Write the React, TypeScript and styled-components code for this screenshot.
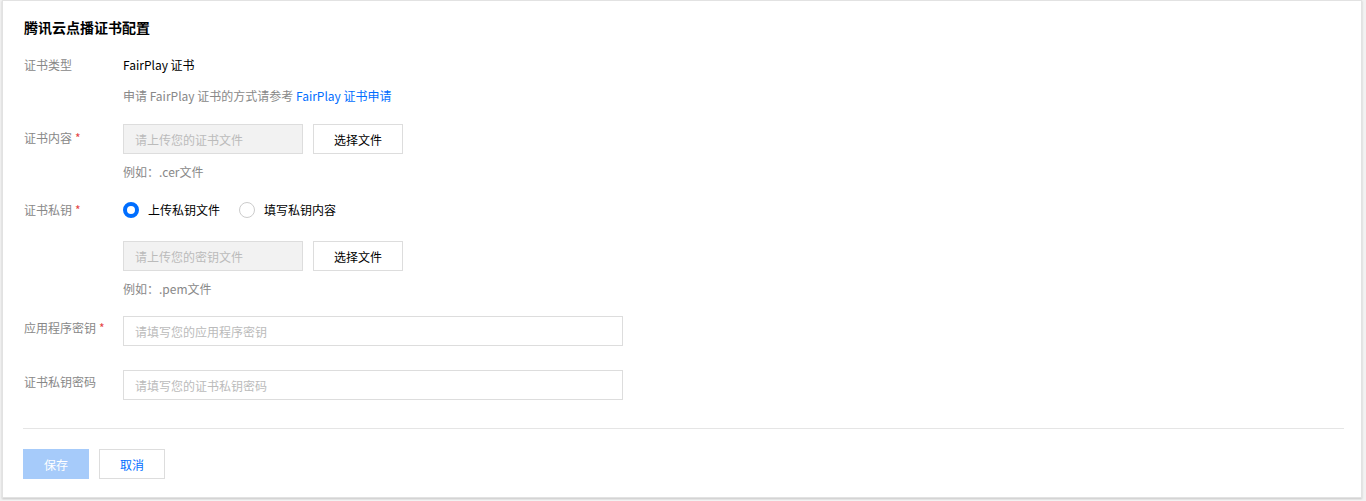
import React from "react";
import styled, { createGlobalStyle } from "styled-components";

const GlobalStyle = createGlobalStyle`
  html, body { margin: 0; padding: 0; }
  body {
    background: #f2f2f2;
    font-family: "Noto Sans CJK SC", "Noto Sans", sans-serif;
    font-size: 12px;
    color: #000;
  }
  * { box-sizing: border-box; }
`;

const Page = styled.div`
  padding: 0 4px 2px 2px;
`;

const Card = styled.div`
  background: #fff;
  border: 1px solid #e2e2e2;
  box-shadow: 0 1px 2px rgba(0, 0, 0, 0.18);
  padding: 16px 17px 18px 21px;
  height: 498px;
`;

const Title = styled.h2`
  margin: 0;
  font-size: 14px;
  line-height: 20px;
  font-weight: 700;
  color: #000;
`;

const Form = styled.div`
  display: flex;
  flex-direction: column;
`;

const Item = styled.div<{ $mt: number }>`
  display: grid;
  grid-template-columns: 99px 1fr;
  margin-top: ${(p) => p.$mt}px;
`;

const Label = styled.div<{ $pt: number }>`
  color: #888;
  line-height: 18px;
  padding-top: ${(p) => p.$pt}px;
  white-space: nowrap;
`;

const Star = styled.span`
  color: #e54545;
  margin-left: 3px;
`;

const Control = styled.div`
  display: flex;
  flex-direction: column;
`;

const Text = styled.div`
  line-height: 18px;
  color: #000;
`;

const Help = styled.div<{ $mt: number }>`
  line-height: 18px;
  color: #888;
  margin-top: ${(p) => p.$mt}px;
`;

const Link = styled.a`
  color: #006eff;
  text-decoration: none;
`;

const Line = styled.div<{ $mt?: number }>`
  display: flex;
  align-items: center;
  gap: 10px;
  margin-top: ${(p) => p.$mt ?? 0}px;
`;

const Input = styled.input<{ $w: number }>`
  width: ${(p) => p.$w}px;
  height: 30px;
  border: 1px solid #ddd;
  background: ${(p) => (p.disabled ? "#f2f2f2" : "#fff")};
  padding: 0 11px;
  font-family: inherit;
  font-size: 12px;
  color: #000;
  outline: none;
  &::placeholder {
    color: #bbb;
  }
`;

const Button = styled.button<{ $w: number; $primary?: boolean }>`
  width: ${(p) => p.$w}px;
  height: 30px;
  border: 1px solid ${(p) => (p.$primary ? "#a6cbfa" : "#ddd")};
  background: ${(p) => (p.$primary ? "#a6cbfa" : "#fff")};
  color: ${(p) => (p.$primary ? "#fff" : "#000")};
  font-family: inherit;
  font-size: 12px;
  padding: 0;
  cursor: pointer;
`;

const LinkButton = styled(Button)`
  color: #006eff;
`;

const RadioGroup = styled.div`
  display: flex;
  align-items: center;
  height: 30px;
  gap: 19px;
`;

const RadioOption = styled.label`
  display: flex;
  align-items: center;
  gap: 9px;
  color: #000;
  line-height: 18px;
`;

const RadioDot = styled.span<{ $checked?: boolean }>`
  width: 16px;
  height: 16px;
  border-radius: 50%;
  background: #fff;
  border: ${(p) => (p.$checked ? "4px solid #006eff" : "1px solid #ccc")};
`;

const Divider = styled.hr`
  border: none;
  border-top: 1px solid #e5e5e5;
  margin: 28px 0 0 -1px;
  height: 0;
`;

const Footer = styled.div`
  display: flex;
  gap: 10px;
  margin-top: 20px;
  margin-left: -1px;
`;

export default function App() {
  return (
    <>
      <GlobalStyle />
      <Page>
        <Card>
          <Title>腾讯云点播证书配置</Title>
          <Form>
            <Item $mt={19}>
              <Label $pt={0}>证书类型</Label>
              <Control>
                <Text>FairPlay 证书</Text>
                <Help $mt={13}>
                  申请 FairPlay 证书的方式请参考 <Link href="#">FairPlay 证书申请</Link>
                </Help>
              </Control>
            </Item>
            <Item $mt={19}>
              <Label $pt={5}>
                证书内容<Star>*</Star>
              </Label>
              <Control>
                <Line>
                  <Input $w={180} disabled placeholder="请上传您的证书文件" />
                  <Button $w={90}>选择文件</Button>
                </Line>
                <Help $mt={9}>例如：.cer文件</Help>
              </Control>
            </Item>
            <Item $mt={14}>
              <Label $pt={6}>
                证书私钥<Star>*</Star>
              </Label>
              <Control>
                <RadioGroup>
                  <RadioOption>
                    <RadioDot $checked />
                    上传私钥文件
                  </RadioOption>
                  <RadioOption>
                    <RadioDot />
                    填写私钥内容
                  </RadioOption>
                </RadioGroup>
                <Line $mt={16}>
                  <Input $w={180} disabled placeholder="请上传您的密钥文件" />
                  <Button $w={90}>选择文件</Button>
                </Line>
                <Help $mt={9}>例如：.pem文件</Help>
              </Control>
            </Item>
            <Item $mt={18}>
              <Label $pt={3}>
                应用程序密钥<Star>*</Star>
              </Label>
              <Control>
                <Input $w={500} placeholder="请填写您的应用程序密钥" />
              </Control>
            </Item>
            <Item $mt={24}>
              <Label $pt={3}>证书私钥密码</Label>
              <Control>
                <Input $w={500} placeholder="请填写您的证书私钥密码" />
              </Control>
            </Item>
          </Form>
          <Divider />
          <Footer>
            <Button $w={66} $primary disabled>
              保存
            </Button>
            <LinkButton $w={66}>取消</LinkButton>
          </Footer>
        </Card>
      </Page>
    </>
  );
}
